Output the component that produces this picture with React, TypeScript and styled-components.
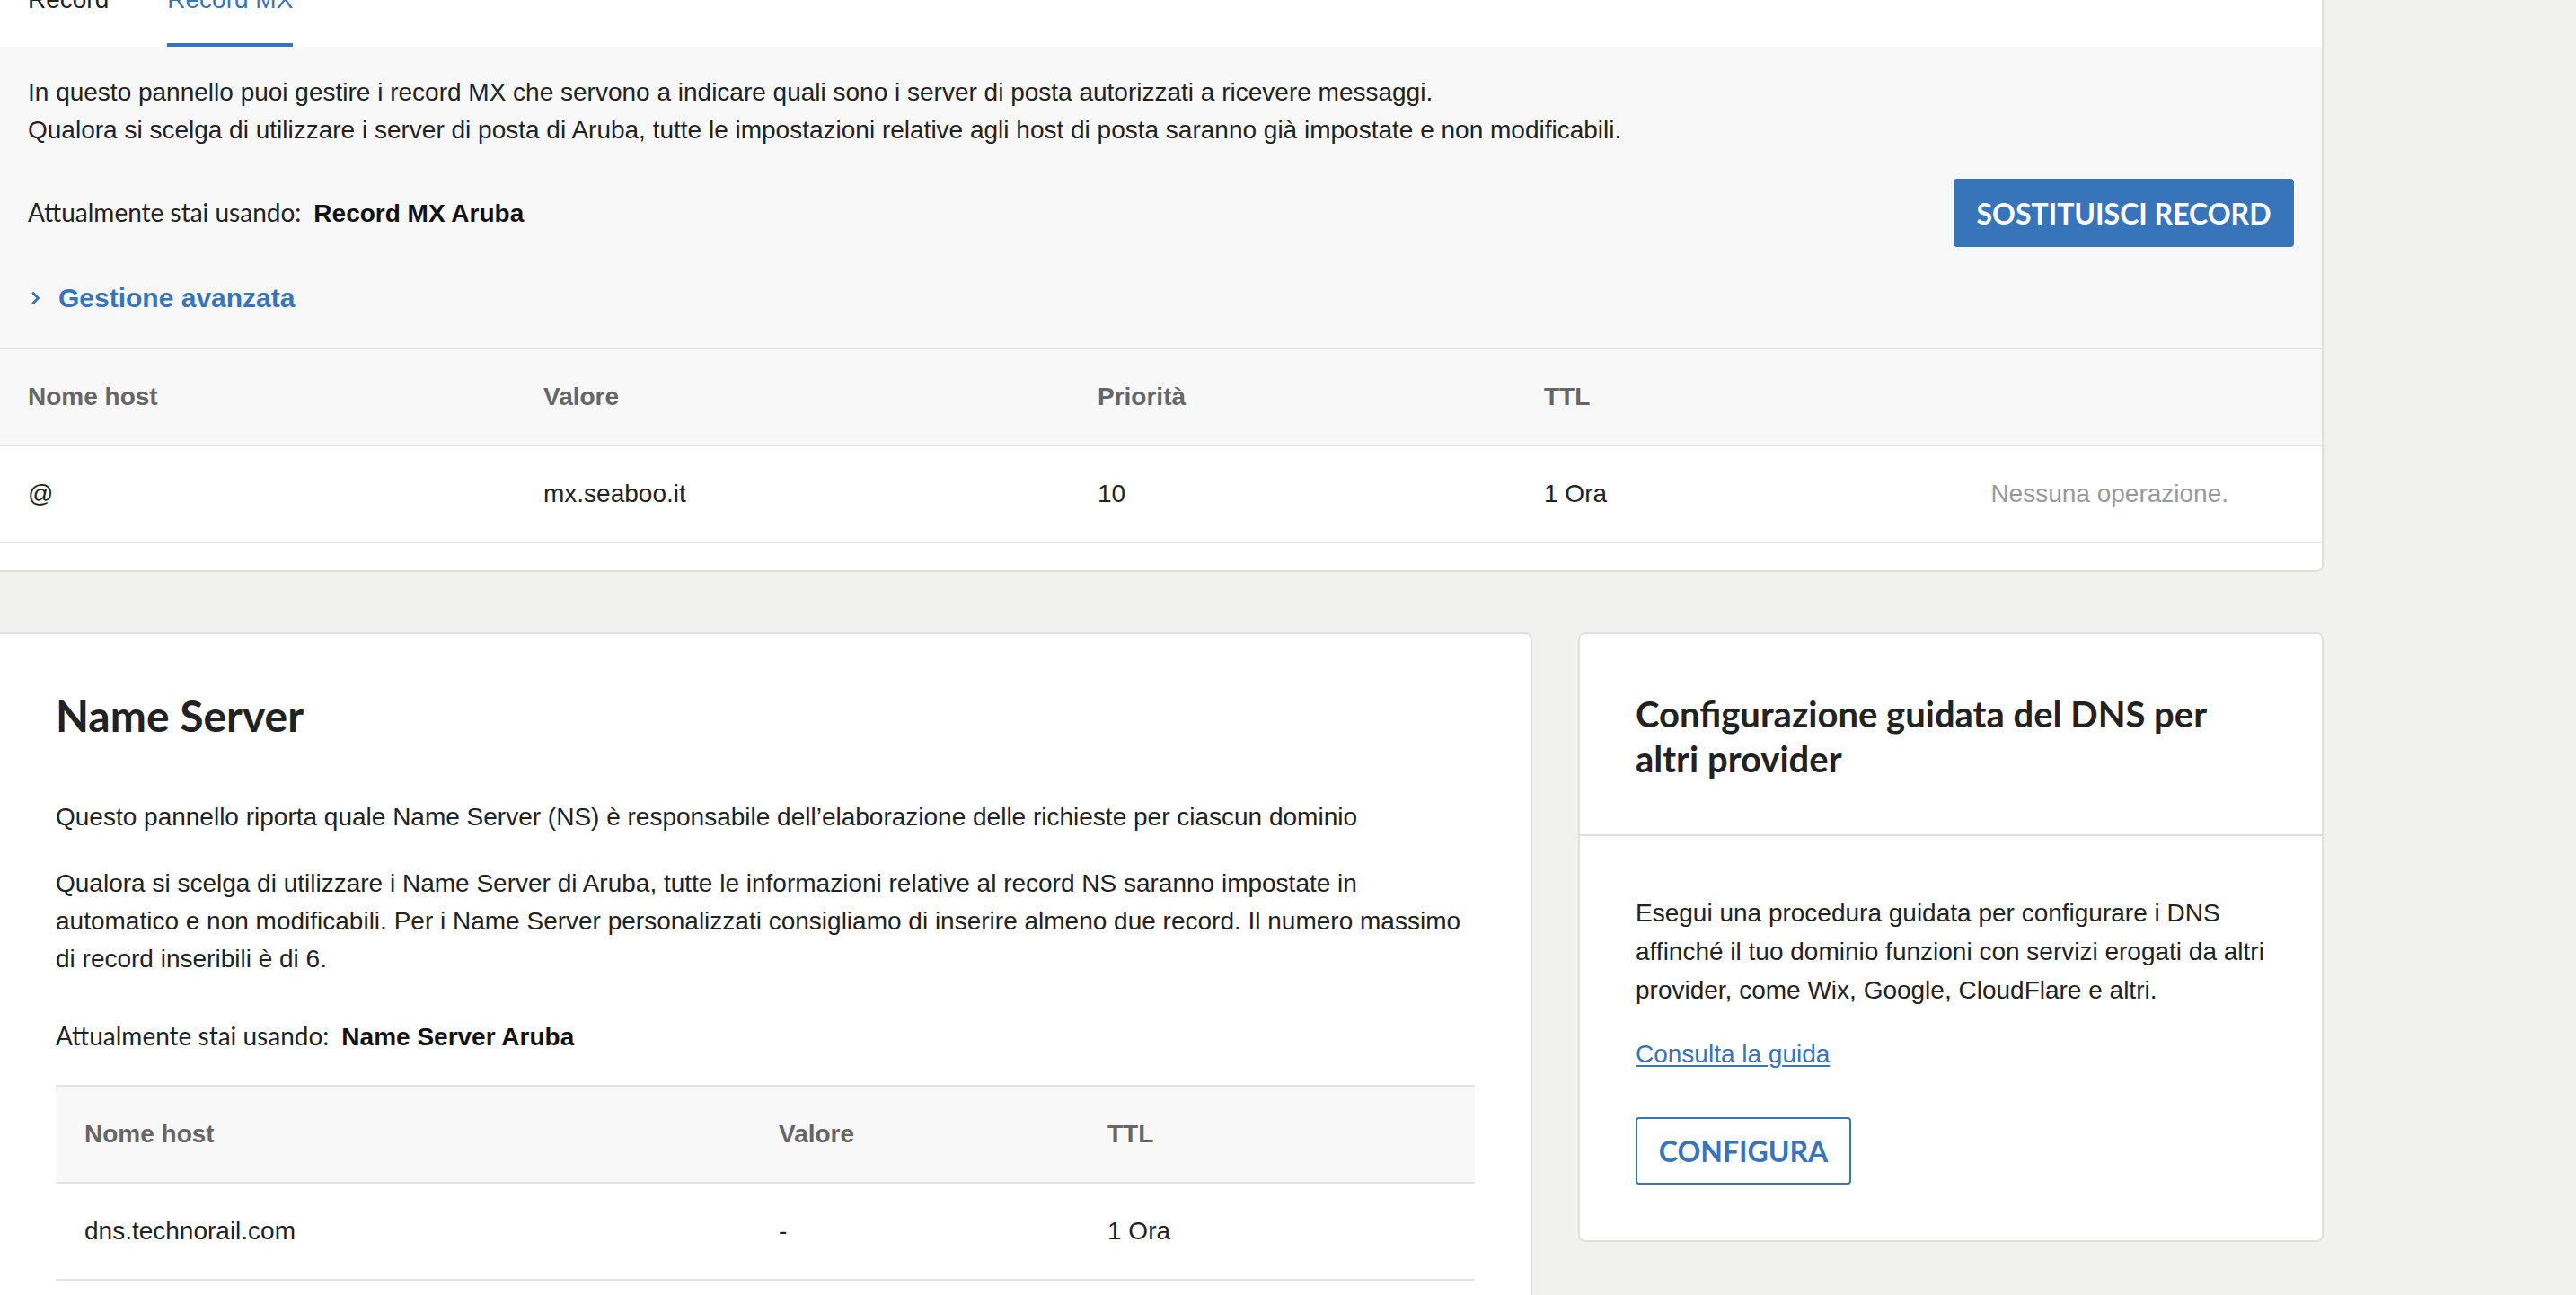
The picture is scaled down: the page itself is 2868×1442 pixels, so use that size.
import React from "react";
import styled, { createGlobalStyle } from "styled-components";

const GlobalStyle = createGlobalStyle`
  html, body { margin: 0; padding: 0; }
  body {
    background: #f1f1f0;
    font-family: "Liberation Sans", Arial, sans-serif;
    color: #222;
    width: 2868px;
  }
  * { box-sizing: border-box; }
`;

const BLUE = "#3874b9";
const LINE = "#e1e3e7";

const Page = styled.div`
  width: 2587px;
  display: flex;
  flex-direction: column;
  gap: 67px;
`;

const TopCard = styled.section`
  background: #fff;
  border-right: 2px solid #dedede;
  border-bottom: 2px solid #dedede;
  border-bottom-right-radius: 8px;
  overflow: hidden;
`;

const TabBar = styled.div`
  height: 52px;
  display: flex;
  align-items: flex-start;
  gap: 65px;
  padding-left: 31px;
  overflow: hidden;
  background: #fff;
`;

const Tab = styled.div<{ $active?: boolean }>`
  margin-top: -14px;
  height: 66px;
  font-size: 28px;
  line-height: 28px;
  color: ${(p) => (p.$active ? BLUE : "#222")};
  border-bottom: 4px solid ${(p) => (p.$active ? BLUE : "transparent")};
`;

const InfoPanel = styled.div`
  background: #f8f8f8;
  padding: 30px 31px 37px 31px;
  display: flex;
  flex-direction: column;
`;

const Text = styled.p<{ $lh?: number }>`
  margin: 0;
  font-size: 28px;
  line-height: ${(p) => p.$lh ?? 42}px;
  color: #222;
`;

const UsingRow = styled.div`
  margin-top: 33px;
  display: flex;
  align-items: center;
  justify-content: space-between;
`;

const Using = styled.div`
  font-size: 28px;
  line-height: 42px;
  display: flex;
  align-items: baseline;
  gap: 14px;
`;

const UsingLabel = styled.span`
  font-family: Lato, "Liberation Sans", sans-serif;
  font-size: 28px;
  color: #222;
`;

const UsingValue = styled.strong`
  font-family: "Liberation Sans", Arial, sans-serif;
  font-size: 28px;
  font-weight: 700;
  color: #111;
`;

const PrimaryButton = styled.button`
  height: 76px;
  width: 379px;
  border: none;
  border-radius: 4px;
  background: ${BLUE};
  color: #fff;
  font-family: Lato, "Liberation Sans", sans-serif;
  font-weight: 700;
  font-size: 32px;
  padding: 0;
  cursor: pointer;
`;

const Advanced = styled.a`
  margin-top: 39px;
  display: flex;
  align-items: center;
  gap: 19px;
  padding-left: 3px;
  color: ${BLUE};
  font-size: 30px;
  font-weight: 700;
  line-height: 36px;
  text-decoration: none;
`;

const Table = styled.div<{ $cols: string }>`
  display: grid;
  grid-template-columns: ${(p) => p.$cols};
  border-top: 2px solid ${LINE};
`;

const HeadCell = styled.div<{ $pl: number }>`
  height: 108px;
  display: flex;
  align-items: center;
  padding-left: ${(p) => p.$pl}px;
  background: #f8f8f8;
  border-bottom: 2px solid ${LINE};
  font-size: 28px;
  font-weight: 700;
  color: #666;
`;

const Cell = styled.div<{ $pl: number; $muted?: boolean; $right?: number }>`
  height: 108px;
  display: flex;
  align-items: center;
  padding-left: ${(p) => p.$pl}px;
  padding-right: ${(p) => p.$right ?? 0}px;
  justify-content: ${(p) => (p.$right ? "flex-end" : "flex-start")};
  background: #fff;
  border-bottom: 2px solid ${LINE};
  font-size: 28px;
  color: ${(p) => (p.$muted ? "#999" : "#222")};
`;

const TableFooter = styled.div`
  height: 30px;
  background: #fff;
`;

const Bottom = styled.div`
  display: flex;
  align-items: flex-start;
  gap: 51px;
`;

const Card = styled.section`
  background: #fff;
  border: 2px solid #e0e0e0;
  border-radius: 8px;
`;

const NameServerCard = styled(Card)`
  width: 1706px;
  border-left: none;
  border-top-left-radius: 0;
  border-bottom-left-radius: 0;
  padding: 62px 62px 62px 62px;
`;

const Heading = styled.h2`
  margin: 0;
  font-family: Lato, "Liberation Sans", sans-serif;
  font-weight: 700;
  font-size: 48px;
  line-height: 58px;
  color: #222;
`;

const Para = styled(Text)<{ $mt: number }>`
  margin-top: ${(p) => p.$mt}px;
`;

const UsingBlock = styled(Using)`
  margin-top: 43px;
`;

const NsTable = styled(Table)`
  margin-top: 32px;
`;

const GuideCard = styled(Card)`
  width: 830px;
  display: flex;
  flex-direction: column;
`;

const GuideHeader = styled.div`
  padding: 64px 62px 59px 62px;
  border-bottom: 2px solid #e0e0e0;
`;

const GuideTitle = styled.h3`
  margin: 0;
  font-family: Lato, "Liberation Sans", sans-serif;
  font-weight: 700;
  font-size: 40px;
  line-height: 50px;
  color: #222;
`;

const GuideBody = styled.div`
  padding: 64px 62px 62px 62px;
  display: flex;
  flex-direction: column;
  align-items: flex-start;
`;

const GuideLink = styled.a`
  margin-top: 29px;
  font-size: 28px;
  line-height: 42px;
  color: ${BLUE};
  text-decoration: underline;
  text-underline-offset: 3px;
`;

const OutlineButton = styled.button`
  margin-top: 49px;
  width: 240px;
  height: 75px;
  border: 2px solid ${BLUE};
  border-radius: 4px;
  background: #fff;
  color: ${BLUE};
  font-family: Lato, "Liberation Sans", sans-serif;
  font-weight: 700;
  font-size: 32px;
  padding: 0;
  cursor: pointer;
`;

const Chevron = () => (
  <svg width="12" height="16" viewBox="0 0 12 16" aria-hidden="true">
    <polyline
      points="3,2.5 8.5,8 3,13.5"
      fill="none"
      stroke={BLUE}
      strokeWidth="3"
      strokeLinecap="round"
      strokeLinejoin="round"
    />
  </svg>
);

const mxCols = "574px 617px 497px 1fr auto";
const nsCols = "773px 366px 1fr";

export default function App() {
  return (
    <>
      <GlobalStyle />
      <Page>
        <TopCard>
          <TabBar>
            <Tab>Record</Tab>
            <Tab $active>Record MX</Tab>
          </TabBar>
          <InfoPanel>
            <Text>
              In questo pannello puoi gestire i record MX che servono a indicare quali sono i server di posta autorizzati a ricevere messaggi.
              <br />
              Qualora si scelga di utilizzare i server di posta di Aruba, tutte le impostazioni relative agli host di posta saranno già impostate e non modificabili.
            </Text>
            <UsingRow>
              <Using>
                <UsingLabel>Attualmente stai usando:</UsingLabel>
                <UsingValue>Record MX Aruba</UsingValue>
              </Using>
              <PrimaryButton>SOSTITUISCI RECORD</PrimaryButton>
            </UsingRow>
            <Advanced href="#">
              <Chevron />
              Gestione avanzata
            </Advanced>
          </InfoPanel>
          <Table $cols={mxCols}>
            <HeadCell $pl={31}>Nome host</HeadCell>
            <HeadCell $pl={31}>Valore</HeadCell>
            <HeadCell $pl={31}>Priorità</HeadCell>
            <HeadCell $pl={31}>TTL</HeadCell>
            <HeadCell $pl={0} />
            <Cell $pl={31}>@</Cell>
            <Cell $pl={31}>mx.seaboo.it</Cell>
            <Cell $pl={31}>10</Cell>
            <Cell $pl={31}>1 Ora</Cell>
            <Cell $pl={0} $right={104} $muted>
              Nessuna operazione.
            </Cell>
          </Table>
          <TableFooter />
        </TopCard>

        <Bottom>
          <NameServerCard>
            <Heading>Name Server</Heading>
            <Para $mt={63}>
              Questo pannello riporta quale Name Server (NS) è responsabile dell’elaborazione delle richieste per ciascun dominio
            </Para>
            <Para $mt={32}>
              Qualora si scelga di utilizzare i Name Server di Aruba, tutte le informazioni relative al record NS saranno impostate in automatico e non modificabili. Per i Name Server personalizzati consigliamo di inserire almeno due record. Il numero massimo di record inseribili è di 6.
            </Para>
            <UsingBlock>
              <UsingLabel>Attualmente stai usando:</UsingLabel>
              <UsingValue>Name Server Aruba</UsingValue>
            </UsingBlock>
            <NsTable $cols={nsCols}>
              <HeadCell $pl={32}>Nome host</HeadCell>
              <HeadCell $pl={32}>Valore</HeadCell>
              <HeadCell $pl={32}>TTL</HeadCell>
              <Cell $pl={32}>dns.technorail.com</Cell>
              <Cell $pl={32}>-</Cell>
              <Cell $pl={32}>1 Ora</Cell>
            </NsTable>
          </NameServerCard>

          <GuideCard>
            <GuideHeader>
              <GuideTitle>Configurazione guidata del DNS per altri provider</GuideTitle>
            </GuideHeader>
            <GuideBody>
              <Text $lh={43}>
                Esegui una procedura guidata per configurare i DNS affinché il tuo dominio funzioni con servizi erogati da altri provider, come Wix, Google, CloudFlare e altri.
              </Text>
              <GuideLink href="#">Consulta la guida</GuideLink>
              <OutlineButton>CONFIGURA</OutlineButton>
            </GuideBody>
          </GuideCard>
        </Bottom>
      </Page>
    </>
  );
}
